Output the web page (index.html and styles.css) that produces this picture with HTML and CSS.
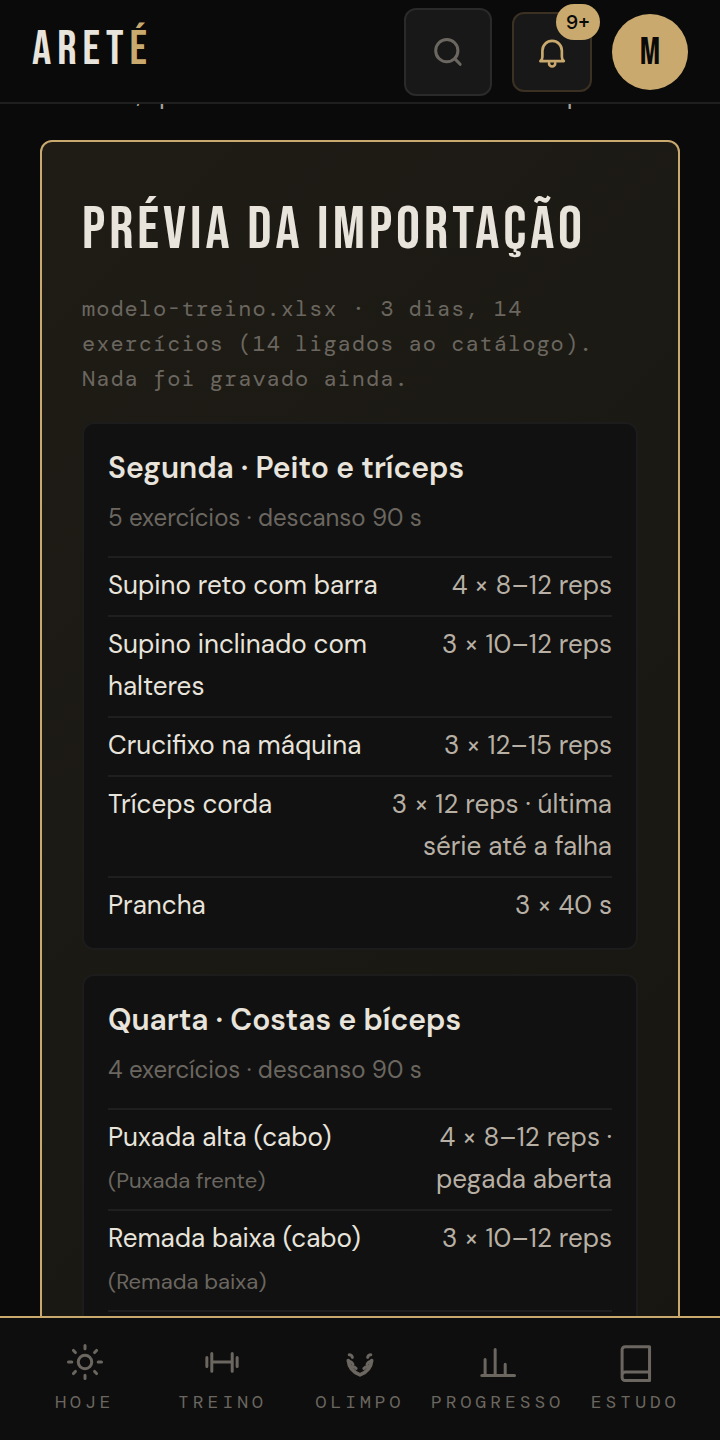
FILE: index.html
```
<!DOCTYPE html>
<html lang="pt-BR">
<head>
<meta charset="utf-8">
<meta name="viewport" content="width=device-width, initial-scale=1">
<title>Areté</title>
<link rel="stylesheet" href="styles.css">
</head>
<body>

<header class="topbar">
  <a class="logo" href="#">ARET<span>É</span></a>
  <div class="actions">
    <button type="button" class="btn-search" aria-label="Buscar">
      <svg width="36" height="36" viewBox="0 0 24 24"><circle cx="11.2" cy="11.1" r="7.4"/><path d="M16.600 16.600l3.500 3.600"/></svg>
    </button>
    <button type="button" class="btn-bell" aria-label="Notificações">
      <svg width="32" height="32" viewBox="0 0 24 24"><path d="M3.300 18.800h17.600c-1-.8-1.500-1.800-1.500-3.300V11a7.300 7.300 0 0 0-14.600 0v4.500c0 1.500-.5 2.500-1.500 3.300zM9.800 20.600a2.300 2.300 0 0 0 4.600 0"/></svg>
      <span class="badge">9+</span>
    </button>
    <button type="button" class="avatar">M</button>
  </div>
</header>

<main>
  <p class="intro">Conferir, quando terminar o envio do treino pronto</p>

  <section class="preview">
    <h2>PRÉVIA DA IMPORTAÇÃO</h2>
    <p class="summary">modelo-treino.xlsx · 3 dias, 14 exercícios (14 ligados ao catálogo). Nada foi gravado ainda.</p>

    <article class="day">
      <h3>Segunda · Peito e tríceps</h3>
      <p class="meta">5 exercícios · descanso 90 s</p>
      <ul>
        <li><span class="name">Supino reto com barra</span><span class="sets">4 × 8–12 reps</span></li>
        <li><span class="name">Supino inclinado com halteres</span><span class="sets">3 × 10–12 reps</span></li>
        <li><span class="name">Crucifixo na máquina</span><span class="sets">3 × 12–15 reps</span></li>
        <li><span class="name">Tríceps corda</span><span class="sets">3 × 12 reps · última série até a falha</span></li>
        <li><span class="name">Prancha</span><span class="sets">3 × 40 s</span></li>
      </ul>
    </article>

    <article class="day">
      <h3>Quarta · Costas e bíceps</h3>
      <p class="meta">4 exercícios · descanso 90 s</p>
      <ul>
        <li><span class="name">Puxada alta (cabo)<br><small>(Puxada frente)</small></span><span class="sets">4 × 8–12 reps · pegada aberta</span></li>
        <li><span class="name">Remada baixa (cabo)<br><small>(Remada baixa)</small></span><span class="sets">3 × 10–12 reps</span></li>
        <li></li>
      </ul>
    </article>
  </section>
</main>

<nav class="tabs">
  <a href="#">
    <svg width="36" height="36" viewBox="0 0 24 24"><circle cx="12" cy="12" r="4.500"/><path d="M12 1v2.200M12 20.800V23M1 12h2.200M20.800 12H23M4.300 4.300l1.300 1.400M18.400 18.300l1.300 1.400M4.300 19.700l1.300-1.400M18.400 5.700l1.300-1.400"/></svg>
    HOJE
  </a>
  <a href="#">
    <svg width="36" height="36" viewBox="0 0 24 24"><path d="M1.900 9v6M5.200 6.300v11.800M5.200 12h13.600M18.800 6.300v11.800M22.100 9v6"/></svg>
    TREINO
  </a>
  <a href="#">
    <svg width="36" height="36" viewBox="0 0 24 24">
      <path class="stem" d="M4.200 11c.4 4.500 3.300 7.800 7.800 9.600 4.500-1.800 7.400-5.100 7.800-9.600"/>
      <path d="M4.800 7.200c1.200 0 1.800.6 2.100 1.700M19.200 7.200c-1.200 0-1.800.6-2.100 1.700M4.500 11.500c1.300.2 2.300.9 2.800 2M19.500 11.500c-1.300.2-2.300.9-2.800 2M6.200 15.200c1.400-.2 2.500.2 3.200 1.100M17.800 15.200c-1.400-.2-2.500.2-3.200 1.100"/>
    </svg>
    OLIMPO
  </a>
  <a href="#">
    <svg width="36" height="36" viewBox="0 0 24 24"><path d="M1.200 21h21.800M3.400 21V10.300M10.100 21V3.700M16.800 21v-7.500"/></svg>
    PROGRESSO
  </a>
  <a href="#">
    <svg width="36" height="36" viewBox="0 0 24 24"><path d="M21.700 1.800H5.400a2 2 0 0 0-2 2v18.500a2 2 0 0 0 2 2h16.300zM3.400 20.700a2 2 0 0 1 2-2h16.300"/></svg>
    ESTUDO
  </a>
</nav>

</body>
</html>
```

FILE: styles.css
```
* {
  box-sizing: border-box;
}
body {
  margin: 0;
  background: #0a0a0a;
  color: #e8e4dc;
  font-family: "DM Sans", Inter, "Open Sans", sans-serif;
  font-size: 26px;
  line-height: 42px;
}
h2, h3, p, ul {
  margin: 0;
  padding: 0;
}
svg {
  display: block;
  overflow: visible;
  fill: none;
  stroke: currentColor;
  stroke-width: 2;
  stroke-linecap: round;
  stroke-linejoin: round;
}
a {
  color: inherit;
  text-decoration: none;
}
button {
  padding: 0;
  font-family: inherit;
}

/* top bar */
.topbar {
  position: fixed;
  top: 0;
  left: 0;
  right: 0;
  z-index: 2;
  display: flex;
  justify-content: space-between;
  align-items: center;
  padding: 8px 32px 6px;
  background: #0a0a0a;
  border-bottom: 2px solid #1f1f1f;
}
.logo {
  padding-bottom: 4px;
  font-family: "Bebas Neue", "Liberation Sans Narrow", sans-serif;
  font-size: 48px;
  letter-spacing: 6px;
}
.logo span {
  color: #c9a96e;
}
.actions {
  display: flex;
  align-items: center;
  gap: 20px;
}
.btn-search, .btn-bell {
  display: flex;
  align-items: center;
  justify-content: center;
  background: #181818;
  border: 2px solid #2a2a2a;
  border-radius: 12px;
}
.btn-search {
  width: 88px;
  height: 88px;
  color: #6b6760;
}
.btn-bell {
  position: relative;
  width: 80px;
  height: 80px;
  color: #c9a96e;
  border-color: #3a3123;
}
.badge {
  position: absolute;
  top: -10px;
  right: -10px;
  min-width: 44px;
  height: 36px;
  border-radius: 18px;
  background: #c9a96e;
  color: #0a0a0a;
  font-family: "DM Mono", "Liberation Mono", monospace;
  font-size: 20px;
  font-weight: 500;
  line-height: 36px;
}
.avatar {
  width: 76px;
  height: 76px;
  border: 0;
  border-radius: 50%;
  background: #c9a96e;
  color: #0a0a0a;
  font-family: "Bebas Neue", "Liberation Sans Narrow", sans-serif;
  font-size: 38px;
}

/* page */
main {
  padding: 73px 40px 124px;
}
.intro {
  height: 67px;
  color: #a8a29a;
}
.preview {
  padding: 40px;
  border: 2px solid #c9a96e;
  border-radius: 12px;
  background: linear-gradient(135deg, #1f1c16, #171610);
}
.preview h2 {
  margin: 8px 0 21px;
  font-family: "Bebas Neue", "Liberation Sans Narrow", sans-serif;
  font-size: 60px;
  font-weight: normal;
  line-height: 80px;
  letter-spacing: 4px;
}
.summary {
  margin-bottom: 26px;
  color: #6b6760;
  font-family: "DM Mono", "Liberation Mono", monospace;
  font-size: 22px;
  line-height: 35px;
  letter-spacing: 1px;
}

/* one card for each training day */
.day {
  margin-bottom: 24px;
  padding: 20px 24px 13px;
  border: 2px solid #1c1c1c;
  border-radius: 12px;
  background: #111;
}
.day h3 {
  font-size: 30px;
  font-weight: 600;
  line-height: 48px;
}
.meta {
  margin: 7px 0 19px;
  color: #6b6760;
  font-size: 24px;
  line-height: 38px;
}
.day ul {
  list-style: none;
}
.day li {
  display: flex;
  gap: 24px;
  padding: 6px 0 9px;
  border-top: 2px solid #1f1f1f;
}
.name {
  flex: 1;
}
.name small {
  color: #6b6760;
  font-size: 22px;
  line-height: 1;
}
.sets {
  max-width: 50%;
  color: #b8b0a4;
  text-align: right;
}

/* bottom navigation */
.tabs {
  position: fixed;
  left: 0;
  right: 0;
  bottom: 0;
  z-index: 2;
  display: flex;
  height: 124px;
  padding: 26px 16px;
  background: #0e0e0e;
  border-top: 2px solid #c9a96e;
}
.tabs a {
  flex: 1 1 0;
  min-width: 0;
  display: flex;
  flex-direction: column;
  align-items: center;
  gap: 10px;
  color: #6b6760;
  font-family: "DM Mono", "Liberation Mono", monospace;
  font-size: 18px;
  line-height: 24px;
  letter-spacing: 4px;
}
.stem {
  stroke-width: 2.4;
}
```
